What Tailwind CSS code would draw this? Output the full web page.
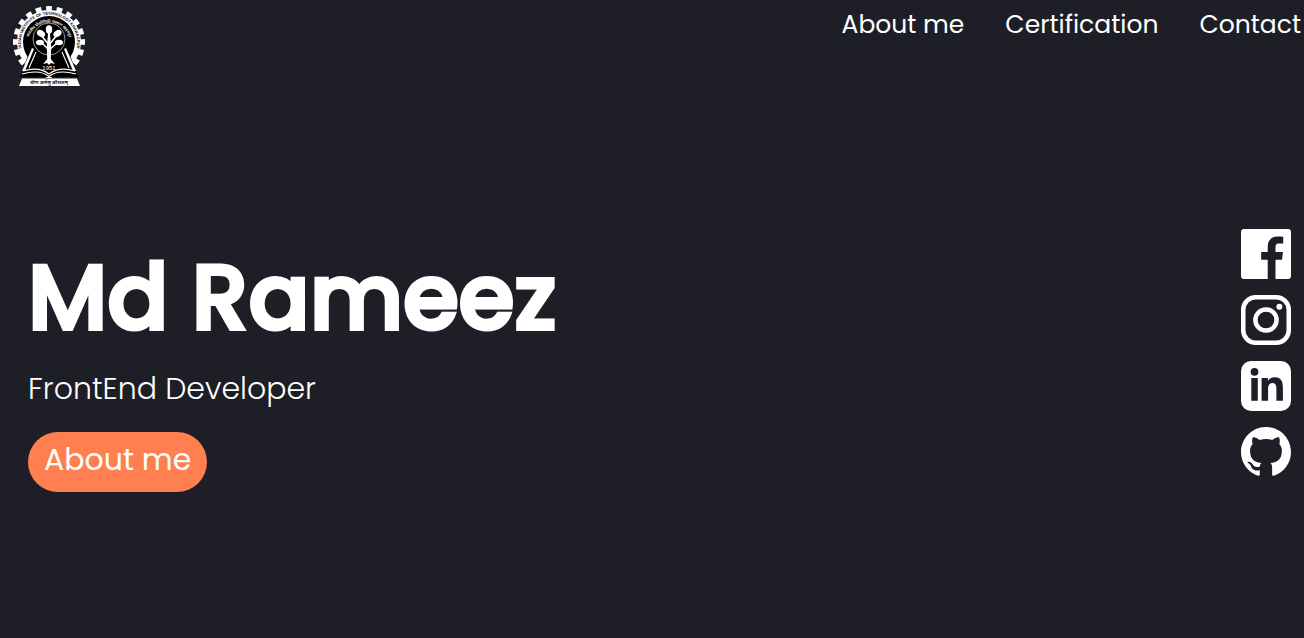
<!DOCTYPE html>
<html lang="en">
<head>
<meta charset="utf-8">
<meta name="viewport" content="width=device-width, initial-scale=1">
<title>Md Rameez</title>
<script src="https://cdn.jsdelivr.net/npm/@tailwindcss/browser@4"></script>
</head>
<body class="flex min-h-screen flex-col bg-[#1e1e26] font-['Poppins','Inter',sans-serif] text-white">
<header class="flex items-start justify-between pl-3">
  <a href="#" aria-label="Home" class="pt-1">
    <svg class="h-[84px] w-[74px]" viewBox="12 4 74 84" role="img" aria-label="Institute crest">
      <defs>
        <path id="outer" d="M25 57A28 28 0 1 1 73 57"/>
        <path id="inner" d="M29 50A21 21 0 1 1 69 50"/>
      </defs>
      <circle cx="49" cy="42" r="33" fill="none" stroke="#fff" stroke-width="6" pathLength="200" stroke-dasharray="5.500 4.500" stroke-dashoffset="2.750" transform="rotate(-90 49 42)"/>
      <circle cx="49" cy="42" r="32" fill="#fff"/>
      <circle cx="49" cy="42" r="26" fill="#000"/>
      <text font-family="Liberation Sans" font-size="4" font-weight="700" fill="#000"><textPath href="#outer" startOffset="50%" text-anchor="middle">INDIAN INSTITUTE OF TECHNOLOGY KHARAGPUR</textPath></text>
      <text font-family="Noto Sans" font-size="4" font-weight="600" fill="#fff"><textPath href="#inner" startOffset="50%" text-anchor="middle">भारतीय प्रौद्योगिकी संस्थान खड़गपुर</textPath></text>
      <path d="M31 47 49 56 67 47 78 77 20 77Z" fill="#000"/>
      <path d="M32 48 22 71 25 71 34 49ZM66 48 76 71 73 71 64 49Z" fill="#fff"/>
      <path d="M23 71Q39 66 49 74Q59 66 75 71M22 74Q40 69 49 76.500Q58 69 76 74M36 52 29 68M62 52 69 68" fill="none" stroke="#fff" stroke-width="1.100"/>
      <circle cx="49" cy="39" r="16" fill="#000" stroke="#fff" stroke-width=".6"/>
      <g fill="#fff">
        <ellipse cx="49" cy="29.500" rx="3.200" ry="4.200"/>
        <ellipse cx="41" cy="33.500" rx="4.400" ry="3.200" transform="rotate(35 41 33.500)"/>
        <ellipse cx="57.500" cy="33.500" rx="4.400" ry="3.200" transform="rotate(-35 57.500 33.500)"/>
        <ellipse cx="40" cy="42.500" rx="4" ry="2.800"/>
        <ellipse cx="59" cy="42.500" rx="4" ry="2.800"/>
        <path d="M48.200 32h1.600l1.400 15-.4 12 4 5-4-1-1.800 2-1.800-2-4 1 4-5-.4-12Z"/>
      </g>
      <path d="M41 35 49 45 57 35M42 43 49 50 57 43" fill="none" stroke="#fff" stroke-width="1.600"/>
      <text x="49" y="70" text-anchor="middle" font-family="Liberation Sans" font-size="6" fill="#fff">1951</text>
      <path d="M22 78.500H77L80 86H19Z" fill="#fff"/>
      <text x="49" y="84" text-anchor="middle" font-family="Noto Sans" font-size="5" font-weight="600" fill="#000">योगः कर्मसु कौशलम्</text>
    </svg>
  </a>
  <nav class="flex gap-[41px] pt-[5px] pr-[3px] text-[25px] leading-10" aria-label="Main">
    <a href="#about">About me</a>
    <a href="#certification">Certification</a>
    <a href="#contact">Contact</a>
  </nav>
</header>
<main class="flex flex-1 items-start justify-between pr-[13px] pl-7">
  <section class="pt-[154px]">
    <h1 class="text-[90px] leading-[112px] font-medium [-webkit-text-stroke:4px_white]">Md Rameez</h1>
    <p class="mt-[11px] text-[30px] leading-12 font-light">FrontEnd Developer</p>
    <button type="button" class="mt-[19px] h-15 rounded-full bg-[#ff7f50] px-4 pb-1 text-[30px] leading-12">About me</button>
  </section>
  <ul class="flex flex-col gap-4 pt-[141px]">
    <li><a href="#facebook" aria-label="Facebook"><svg class="block size-[50px]" viewBox="0 0 24 24" fill="currentColor"><path d="M22.676 0H1.324C.593 0 0 .593 0 1.324v21.352C0 23.408.593 24 1.324 24h11.494v-9.294H9.689v-3.621h3.129V8.410c0-3.099 1.894-4.785 4.659-4.785 1.325 0 2.464.097 2.796.141v3.240h-1.921c-1.500 0-1.792.721-1.792 1.771v2.311h3.584l-.465 3.630H16.560V24h6.115c.733 0 1.325-.592 1.325-1.324V1.324C24 .593 23.408 0 22.676 0"/></svg></a></li>
    <li><a href="#instagram" aria-label="Instagram"><svg class="block size-[50px]" viewBox="0 0 50 50" fill="none" stroke="currentColor" stroke-width="4.500"><rect x="2.250" y="2.250" width="45.500" height="45.500" rx="12.500"/><circle cx="25" cy="25" r="10.600"/><circle cx="38.400" cy="11.700" r="3" fill="currentColor" stroke="none"/></svg></a></li>
    <li><a href="#linkedin" aria-label="LinkedIn"><svg class="block size-[50px]" viewBox="0 0 50 50"><rect width="50" height="50" rx="10" fill="currentColor"/><g fill="#1e1e26"><circle cx="13.500" cy="10.800" r="3.900"/><path d="M10.300 17H16.800V39.700H10.300ZM20.600 17H26.900V20.100C28 18 30.500 16.300 33.900 16.300 40.200 16.300 41.900 20.400 41.900 27.200V39.700H35.400V28.600C35.400 25 35 22 31.600 22 28 22 27.100 24.800 27.100 28.500V39.700H20.600Z"/></g></svg></a></li>
    <li><a href="#github" aria-label="GitHub"><svg class="block size-[50px]" viewBox="0 0.300 24 24" fill="currentColor"><path d="M12 .297c-6.630 0-12 5.373-12 12 0 5.303 3.438 9.800 8.205 11.385.6.113.82-.258.82-.577 0-.285-.01-1.040-.015-2.040-3.338.724-4.042-1.610-4.042-1.610C4.422 18.070 3.633 17.700 3.633 17.700c-1.087-.744.084-.729.084-.729 1.205.084 1.838 1.236 1.838 1.236 1.070 1.835 2.809 1.305 3.495.998.108-.776.417-1.305.76-1.605-2.665-.3-5.466-1.332-5.466-5.930 0-1.310.465-2.380 1.235-3.220-.135-.303-.54-1.523.105-3.176 0 0 1.005-.322 3.300 1.230.96-.267 1.980-.399 3-.405 1.020.006 2.040.138 3 .405 2.280-1.552 3.285-1.230 3.285-1.230.645 1.653.24 2.873.12 3.176.765.840 1.230 1.910 1.230 3.220 0 4.610-2.805 5.625-5.475 5.920.42.360.81 1.096.81 2.220 0 1.606-.015 2.896-.015 3.286 0 .315.21.690.825.570C20.565 22.092 24 17.592 24 12.297c0-6.627-5.373-12-12-12"/></svg></a></li>
  </ul>
</main>
</body>
</html>
